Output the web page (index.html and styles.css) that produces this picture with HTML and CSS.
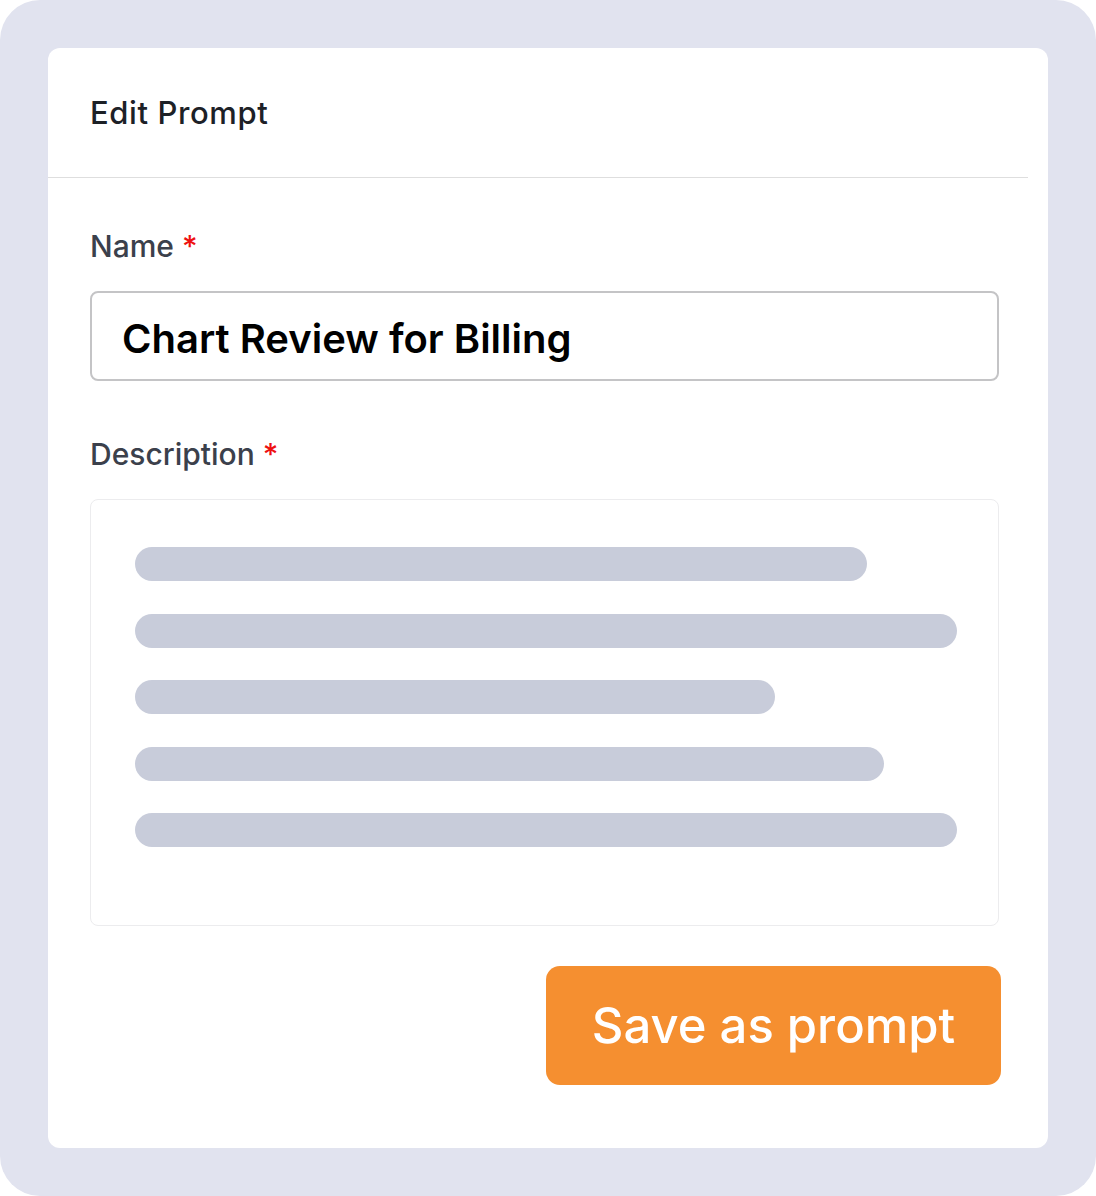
FILE: index.html
```html
<!DOCTYPE html>
<html lang="en">
<head>
<meta charset="utf-8">
<title>Edit Prompt</title>
<link rel="stylesheet" href="styles.css">
</head>
<body>
<div class="frame">
  <div class="card">
    <div class="card-header">
      <h1 class="title">Edit Prompt</h1>
    </div>
    <div class="card-body">
      <label class="label label-name">Name <span class="req">*</span></label>
      <div class="input">Chart Review for Billing</div>
      <label class="label label-desc">Description <span class="req">*</span></label>
      <div class="textarea">
        <div class="bar" style="width:732px"></div>
        <div class="bar" style="width:822px"></div>
        <div class="bar" style="width:640px"></div>
        <div class="bar" style="width:749px"></div>
        <div class="bar" style="width:822px"></div>
      </div>
      <div class="actions">
        <button class="btn-primary" type="button">Save as prompt</button>
      </div>
    </div>
  </div>
</div>
</body>
</html>
```

FILE: styles.css
```css
html, body {
  margin: 0;
  padding: 0;
  background: #ffffff;
}

body {
  font-family: Inter, "Noto Sans", "Liberation Sans", sans-serif;
}

.frame {
  width: 1096px;
  height: 1196px;
  box-sizing: border-box;
  padding: 48px;
  background: #e1e3ef;
  border-radius: 40px;
}

.card {
  height: 1100px;
  background: #ffffff;
  border-radius: 12px;
  display: flex;
  flex-direction: column;
}

.card-header {
  height: 129px;
  margin-right: 20px;
  padding-left: 42px;
  border-bottom: 1px solid #dedede;
  display: flex;
  align-items: center;
}

.title {
  margin: 0;
  font-size: 31px;
  line-height: 36px;
  font-weight: 500;
  color: #1d2127;
  letter-spacing: 0.6px;
}

.card-body {
  padding: 0 49px 0 42px;
  display: flex;
  flex-direction: column;
}

.label {
  display: block;
  font-size: 30px;
  line-height: 36px;
  font-weight: 500;
  color: #3b404b;
}

.label-name {
  margin-top: 50px;
}

.label-desc {
  margin-top: 55px;
}

.req {
  color: #ee1111;
}

.input {
  margin-top: 27px;
  height: 90px;
  box-sizing: border-box;
  border: 2px solid #c4c4c6;
  border-radius: 8px;
  padding: 6px 30px 0;
  font-size: 40px;
  line-height: 80px;
  font-weight: 600;
  color: #000000;
}

.textarea {
  margin-top: 27px;
  height: 427px;
  box-sizing: border-box;
  border: 1px solid #ececee;
  border-radius: 8px;
  padding: 47px 0 0 44px;
  display: flex;
  flex-direction: column;
  gap: 32.5px;
}

.bar {
  height: 34px;
  border-radius: 17px;
  background: #c8ccda;
}

.actions {
  margin-top: 40px;
  display: flex;
  justify-content: flex-end;
  margin-right: -2px;
}

.btn-primary {
  width: 455px;
  height: 119px;
  border: none;
  border-radius: 14px;
  background: #f58f30;
  color: #ffffff;
  font-family: Inter, "Noto Sans", "Liberation Sans", sans-serif;
  font-size: 49px;
  font-weight: 500;
  padding: 0;
  cursor: pointer;
}
```
